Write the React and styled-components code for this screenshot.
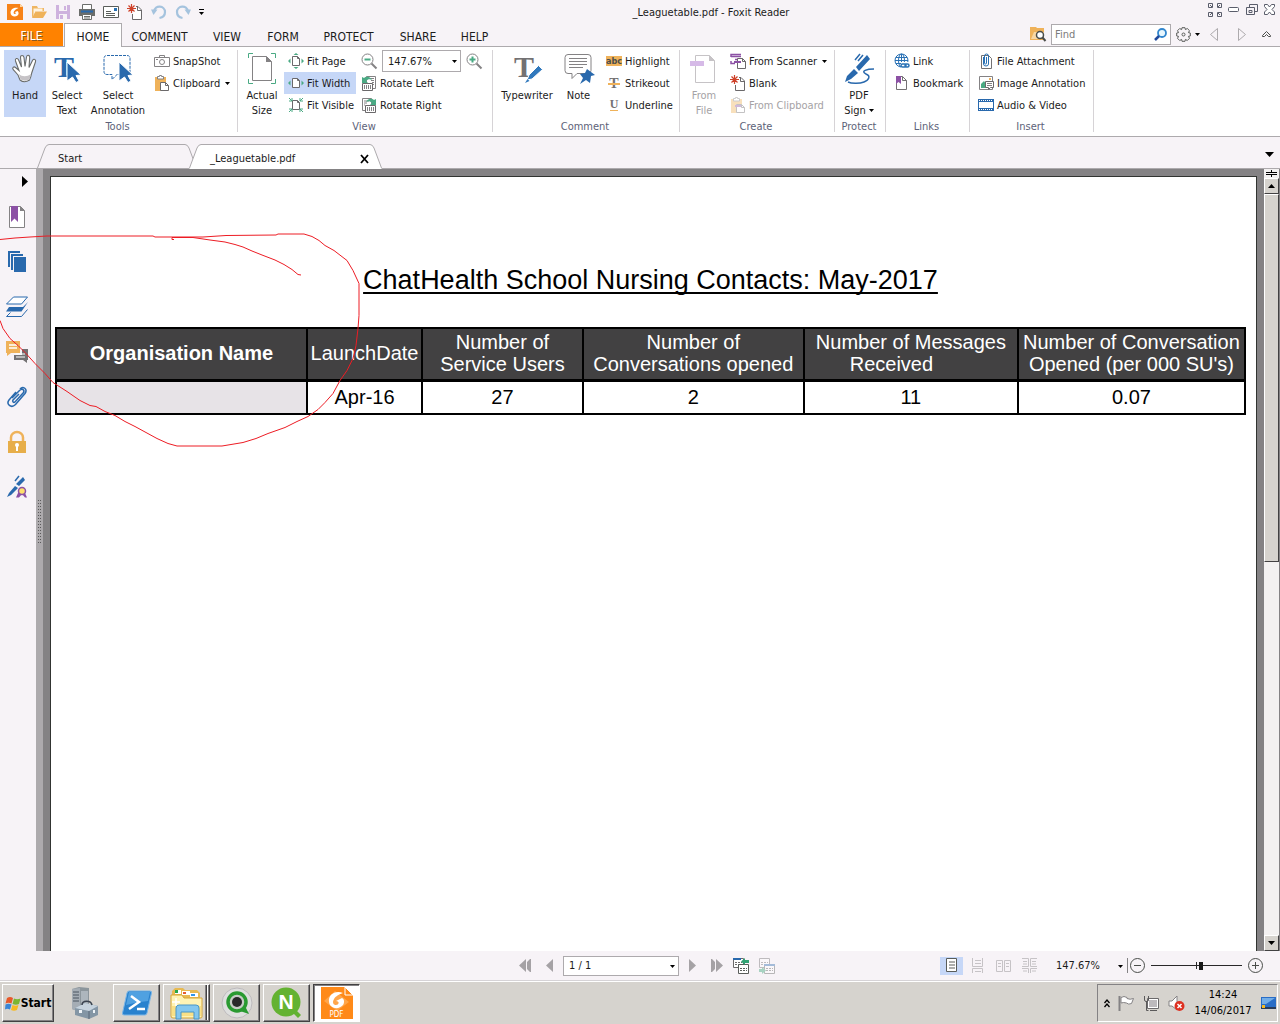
import React from "react";
import styled, { createGlobalStyle } from "styled-components";

const GlobalStyle = createGlobalStyle`
  * {
    box-sizing: border-box;
  }

  body {
    margin: 0;
    font-family: "DejaVu Sans Condensed", "DejaVu Sans", Tahoma, sans-serif;
    font-size: 11px;
    color: #1b1b1b;
  }

  button,
  input,
  select {
    font: inherit;
    color: inherit;
    margin: 0;
  }

  button {
    border: 0;
    padding: 0;
    background: none;
    white-space: nowrap;
  }

  svg {
    display: block;
    flex: none;
    overflow: visible;
  }
`;

const Window = styled.div`
  display: flex;
  flex-direction: column;
  height: 100vh;
  background: #f7f3f7;
  overflow: hidden;
`;

/* ---------- title bar ---------- */

const TitleBar = styled.header`
  display: flex;
  align-items: center;
  height: 23px;
  padding: 0 4px 0 7px;
`;

const QuickAccess = styled.div`
  display: flex;
  align-items: center;
  gap: 8px;
`;

const Title = styled.h1`
  flex: 1;
  margin: 0;
  padding: 2px 0 0 10px;
  font-size: 11px;
  font-weight: 400;
  text-align: center;
`;

const WindowButtons = styled.div`
  display: flex;
  align-items: center;
  gap: 5px;
  padding-bottom: 4px;
`;

/* ---------- menu ---------- */

const MenuBar = styled.nav`
  display: flex;
  height: 24px;
  border-bottom: 1px solid #adaaad;
`;

const FileTab = styled.button`
  width: 63px;
  margin-right: 1px;
  padding-top: 2px;
  background: #ff8200;
  color: #fff;
  font-size: 12px;
  text-shadow: 1px 1px 0 #8a5a20;
`;

const MenuTab = styled.button`
  height: ${(p) => (p.$active ? "24px" : "23px")};
  width: ${(p) => p.$width}px;
  padding-top: 3px;
  font-size: 12px;
  background: ${(p) => (p.$active ? "#fff" : "none")};
  border: 1px solid ${(p) => (p.$active ? "#adaaad" : "transparent")};
  border-bottom: 0;
`;

const MenuTools = styled.div`
  display: flex;
  align-items: center;
  margin-left: auto;
  padding-right: 9px;
  height: 22px;
`;

const FindBox = styled.label`
  display: flex;
  align-items: center;
  width: 120px;
  height: 21px;
  margin: 0 5px;
  padding: 0 3px;
  background: #fff;
  border: 1px solid #adaaad;
`;

const FindInput = styled.input`
  flex: 1;
  min-width: 0;
  border: 0;
  padding: 0;
  outline: 0;
  background: none;

  &::placeholder {
    color: #7b7b7b;
    opacity: 1;
  }
`;

const ToolGap = styled.div`
  display: flex;
  align-items: center;
  gap: ${(p) => p.$gap}px;
`;

/* ---------- ribbon ---------- */

const Ribbon = styled.section`
  display: flex;
  height: 90px;
  padding-top: 3px;
  background: #fff;
  border-bottom: 1px solid #adaaad;
`;

const Group = styled.div`
  display: flex;
  flex-direction: column;
  width: ${(p) => p.$width}px;
  height: 82px;
  border-right: 1px solid #d6d3d6;
`;

const GroupBody = styled.div`
  display: flex;
  height: 67px;
  padding-left: ${(p) => p.$left}px;
`;

const GroupLabel = styled.div`
  height: 15px;
  line-height: 19px;
  padding-right: 2px;
  text-align: center;
  color: #5d6279;
`;

const BigButton = styled.button`
  display: flex;
  flex-direction: column;
  align-items: center;
  width: ${(p) => p.$width}px;
  height: 67px;
  padding-top: 2px;
  line-height: 15px;
  background: ${(p) => (p.$active ? "#c6d7f7" : "none")};
  color: ${(p) => (p.$off ? "#a5a2a5" : "inherit")};

  > svg {
    margin-bottom: 4px;
  }
`;

const Column = styled.div`
  display: flex;
  flex-direction: column;
  width: ${(p) => (p.$width ? `${p.$width}px` : "auto")};
  margin-left: ${(p) => p.$left || 0}px;
`;

const SmallButton = styled.button`
  display: flex;
  align-items: center;
  gap: 3px;
  height: 22px;
  padding: 0 0 0 4px;
  background: ${(p) => (p.$active ? "#c6d7f7" : "none")};
  color: ${(p) => (p.$off ? "#a5a2a5" : "inherit")};

  svg:not(:first-child) {
    margin-left: 2px;
  }
`;

const ZoomRow = styled.div`
  display: flex;
  align-items: center;
  gap: 5px;
  height: 22px;
  padding-left: 4px;
`;

const SelectWrap = styled.div`
  position: relative;
  width: ${(p) => p.$width}px;
  height: ${(p) => p.$height}px;

  svg {
    position: absolute;
    right: 4px;
    top: calc(50% - 1px);
    pointer-events: none;
  }
`;

const Select = styled.select`
  appearance: none;
  width: 100%;
  height: 100%;
  padding: 0 5px;
  background: #fff;
  border: 1px solid #adaaad;
  border-radius: 0;
`;

const PlainSelect = styled(Select)`
  padding-left: 12px;
  background: transparent;
  border-width: 0;
`;

/* ---------- document tabs ---------- */

const TabStrip = styled.div`
  display: flex;
  align-items: flex-end;
  height: 32px;
  padding: 0 6px 0 37px;
  border-bottom: 1px solid #adaaad;
`;

const DocTab = styled.div`
  display: flex;
  height: ${(p) => (p.$active ? "25px" : "24px")};
  margin-bottom: ${(p) => (p.$active ? "-1px" : "0")};
  margin-left: ${(p) => (p.$active ? "-8px" : "0")};
  position: relative;
`;

const DocTabBody = styled.div`
  display: flex;
  align-items: center;
  justify-content: space-between;
  width: ${(p) => p.$width}px;
  padding: 3px 0 0 8px;
  background: ${(p) => (p.$active ? "#fff" : "#f7f3f7")};
  border-top: 1px solid #adaaad;
`;

const TabMenu = styled.button`
  margin: 0 0 11px auto;
`;

/* ---------- workspace ---------- */

const Workspace = styled.main`
  position: relative;
  display: flex;
  flex: 1;
  min-height: 0;
`;

const SideBar = styled.aside`
  display: flex;
  flex-direction: column;
  align-items: center;
  width: 36px;
  padding: 7px 2px 0 0;
`;

const Expand = styled.button`
  align-self: flex-end;
  margin: 0 6px 7px 0;
`;

const SideButton = styled.button`
  display: flex;
  align-items: center;
  justify-content: center;
  height: 45px;
`;

const Splitter = styled.div`
  display: flex;
  align-items: center;
  justify-content: center;
  width: 7px;
  padding-bottom: 76px;
  background: #adaaad;
`;

const Canvas = styled.div`
  flex: 1;
  display: flex;
  padding: 7px 7px 0;
  background: #848284;
`;

const Page = styled.article`
  flex: 1;
  padding: 86px 10px 0 4px;
  background: #fff;
  border: 1px solid #313431;
  border-bottom: 0;
  font-family: "Liberation Sans", Arial, sans-serif;
  color: #000;
`;

const PageTitle = styled.h2`
  margin: 0 0 30px;
  font-size: 27px;
  line-height: 34px;
  font-weight: 400;
  text-align: center;
  text-decoration: underline;
  text-decoration-thickness: 2px;
  text-underline-offset: 3px;
  text-decoration-skip-ink: none;
`;

const Table = styled.table`
  width: 100%;
  table-layout: fixed;
  border-collapse: collapse;
  font-size: 20px;
  line-height: 22px;
  text-align: center;
`;

const Col = styled.col`
  width: ${(p) => p.$width}%;
`;

const Th = styled.th`
  height: 52px;
  padding: 0 0 2px;
  background: #424142;
  color: #fff;
  font-weight: ${(p) => (p.$bold ? 700 : 400)};
  border: 2px solid #000;
  border-bottom-width: 3px;
  white-space: pre;
`;

const Td = styled.td`
  height: 34px;
  padding: 0;
  border: 2px solid #000;
  background: ${(p) => (p.$shaded ? "#e7e3e7" : "#fff")};
`;

const ScrollBar = styled.div`
  display: flex;
  flex-direction: column;
  width: 16px;
  background: #f3f1f1;
  border-right: 1px solid #848284;
`;

const ScrollButton = styled.button`
  display: flex;
  align-items: center;
  justify-content: center;
  height: 16px;
  background: #d6d3ce;
  border: 1px solid;
  border-color: #fff #424142 #424142 #fff;
`;

const ScrollTrack = styled.div`
  flex: 1;
`;

const ScrollThumb = styled.div`
  height: 49.6%;
  background: #d6d3ce;
  border: 1px solid;
  border-color: #fff #424142 #424142 #fff;
`;

const SplitHandle = styled.div`
  display: flex;
  align-items: center;
  justify-content: center;
  height: 9px;
`;

const Annotation = styled.svg`
  position: absolute;
  left: 0;
  top: 0;
  pointer-events: none;
`;

/* ---------- status bar ---------- */

const StatusBar = styled.footer`
  display: grid;
  grid-template-columns: 1fr auto 1fr;
  align-items: center;
  height: 29px;
  padding-left: 14px;
`;

const PageNav = styled.div`
  grid-column: 2;
  display: flex;
  align-items: center;
  gap: 10px;
`;

const ViewControls = styled.div`
  display: flex;
  align-items: center;
  justify-content: flex-end;
  padding-right: 17px;
`;

const ViewButton = styled.button`
  display: flex;
  align-items: center;
  justify-content: center;
  width: 23px;
  height: 18px;
  margin-right: 3px;
  background: ${(p) => (p.$active ? "#c6d7f7" : "none")};
`;

const Divider = styled.span`
  width: 1px;
  height: 15px;
  margin-right: 2px;
  background: #848284;
`;

const Slider = styled.input`
  appearance: none;
  width: 91px;
  height: 16px;
  margin: 0 6px;
  background: linear-gradient(#292829, #292829) center / 100% 1px no-repeat,
    linear-gradient(#292829, #292829) center / 1px 7px no-repeat;

  &::-webkit-slider-thumb {
    appearance: none;
    width: 4px;
    height: 8px;
    background: #181818;
  }
`;

/* ---------- taskbar ---------- */

const TaskBar = styled.footer`
  display: flex;
  align-items: center;
  gap: 3px;
  height: 44px;
  padding: 2px 2px 1px;
  background: #d6d3ce;
  border-top: 1px solid #d6d3d6;
  box-shadow: inset 0 1px 0 #fff;
`;

const TaskButton = styled.button`
  display: flex;
  align-items: center;
  justify-content: center;
  width: ${(p) => p.$width || 47}px;
  height: 38px;
  background: #d6d3ce;
  border: 1px solid;
  border-color: #fff #424142 #424142 #fff;
  box-shadow: inset -1px -1px 0 #848284;
  font-size: 12px;
  font-weight: 700;
  color: #000;
`;

const FlatTaskButton = styled(TaskButton)`
  border-color: transparent;
  box-shadow: none;
`;

const StackedTaskButton = styled(TaskButton)`
  box-shadow: inset -1px -1px 0 #848284, inset -2px 0 0 #fff, inset -3px 0 0 #424142, inset -4px 0 0 #848284;
`;

const PressedTaskButton = styled(TaskButton)`
  background: #fff;
  border-color: #424142 #fff #fff #424142;
  box-shadow: inset 1px 1px 0 #848284;
`;

const Tray = styled.div`
  display: flex;
  align-items: center;
  gap: 8px;
  height: 38px;
  margin-left: auto;
  padding: 0 1px 0 6px;
  border: 1px solid;
  border-color: #848284 #fff #fff #848284;
`;

const Clock = styled.div`
  width: 60px;
  line-height: 16px;
  text-align: center;
  color: #000;
`;

/* ---------- icons ---------- */

const Glyph = styled.text`
  font-family: ${(p) => (p.$serif ? '"Liberation Serif", serif' : '"Liberation Sans", sans-serif')};
  font-size: ${(p) => p.$size}px;
  font-weight: 700;
  text-anchor: middle;
`;

const Icon = ({ w = 16, h = 16, box, children }) => (
  <svg width={w} height={h} viewBox={box || `0 0 ${w} ${h}`} fill="none" aria-hidden="true">
    {children}
  </svg>
);

const Caret = () => (
  <Icon w={5} h={3}>
    <path d="M0 0h5L2.500 3z" fill="#000" />
  </Icon>
);

const FoxitMark = () => (
  <Icon>
    <path d="M0 0h13l3 3v13H0z" fill="#f78218" />
    <path d="M13 0v3h3z" fill="#ffd7a5" />
    <path d="M11.500 4C7.500 2.800 3.500 5 3.500 8.500c0 3.500 4 5 6.700 3.300 1.800-1.300 1.800-3.500.3-4.800L7.500 8.300c2 .2 1.500 2.200 0 1.700C5.500 9 7 5.800 11.500 4z" fill="#fff" />
  </Icon>
);

const FolderIcon = () => (
  <Icon>
    <path d="M1 14V2h5l1 2h6v3H5z" fill="#efb663" />
    <path d="M2.500 12V4.500h9V7H5z" fill="#fff3de" />
    <path d="M4.500 7.500H16L12 14H1z" fill="#efb25a" />
  </Icon>
);

const SaveIcon = () => (
  <Icon>
    <path d="M1 1h14v14H1z" fill="#ceb2de" />
    <path d="M4 1h8v6H4zM4 10h8v5H4z" fill="#f7f3f7" />
    <path d="M9 2h2v4H9zM5 11h3v4H5z" fill="#ceb2de" />
  </Icon>
);

const PrintIcon = () => (
  <Icon>
    <path d="M3.500.5h9v5h-9z" fill="#fff" stroke="#6b6d6b" />
    <path d="M0 5h16v7H0z" fill="#6b6d6b" />
    <path d="M2 6.500h12v2H2z" fill="#2969ad" />
    <path d="M3.500 10.500h9v5h-9z" fill="#fff" stroke="#6b6d6b" />
    <path d="M5 12.500h6M5 14h6" stroke="#6b6d6b" />
  </Icon>
);

const MailIcon = () => (
  <Icon>
    <path d="M.5 2.500h15v11H.5z" fill="#fff" stroke="#5a5d5a" />
    <path d="M11 4h3v3h-3z" fill="#2971b5" />
    <path d="M3 7.500h5M3 9.500h9M3 11.500h9" stroke="#5a5d5a" />
  </Icon>
);

const NewIcon = () => (
  <Icon>
    <path d="M9 2.500h2l3.500 3.500v9.500H5.500V10" fill="#fff" stroke="#6b696b" />
    <path d="M10.500 3v3.500H14" stroke="#6b696b" />
    <path d="M4.500 0v9M0 4.500h9M1.500 1.500l6 6M7.500 1.500l-6 6" stroke="#ce4129" strokeWidth="1.200" />
  </Icon>
);

const UndoIcon = () => (
  <Icon>
    <path d="M3 7.500C4 .5 14 1.500 14 8c0 3.500-2.500 5.500-5.500 6" stroke="#a5c3de" strokeWidth="2.200" />
    <path d="M0 5.500h6.500L2.500 11z" fill="#a5c3de" />
  </Icon>
);

const RedoIcon = () => (
  <Icon>
    <path d="M13 7.500C12 .5 2 1.500 2 8c0 3.500 2.500 5.500 5.500 6" stroke="#a5c3de" strokeWidth="2.200" />
    <path d="M16 5.500H9.500l4 5.500z" fill="#a5c3de" />
  </Icon>
);

const HandIcon = () => (
  <Icon w={28} h={32}>
    <path
      d="M9 28L7 23 2.500 18c-2-2 .3-4 2-2.500l3.500 3L4.500 9c-.8-2.500 2-3.500 3-1.200l3 7.200-1-9.500c0-2.700 3-2.700 3.500 0l1 9 1.500-9.500c.6-2.600 3.400-2 3.200.5L18 15.500l3.500-7c1.300-2.200 3.800-1 3 1.200l-3.700 11c-.6 3-1 5-2.300 7.300-3 2-7 2-9.500 0z"
      fill="#fff"
      stroke="#6b6d6b"
      strokeWidth="1.100"
    />
    <path d="M8 22c3 3 8 3 12 0l-1.500 5.500c-2.500 1.500-6 1.500-9 0z" fill="#c6c3c6" />
  </Icon>
);

const CURSOR = "M0 0l14 13-5 .5 3 5.500-3 1.500L5.500 15 0 19z";

const SelectTextIcon = () => (
  <Icon w={28} h={32}>
    <Glyph $serif $size={30} x="11" y="25" fill="#2969ad">T</Glyph>
    <g transform="translate(14 10)">
      <path d={CURSOR} fill="#2969ad" stroke="#fff" />
    </g>
  </Icon>
);

const SelectAnnotationIcon = () => (
  <Icon w={30} h={32}>
    <path d="M4 3.500h20q3 0 3 3v13q0 3-3 3H14l-5 5v-5H4q-3 0-3-3v-13q0-3 3-3z" stroke="#2969ad" strokeDasharray="3 1" />
    <g transform="translate(16 10)">
      <path d={CURSOR} fill="#2969ad" stroke="#fff" />
    </g>
  </Icon>
);

const CameraIcon = () => (
  <Icon>
    <path d="M.5 4.500h15v9H.5zM5.500 4V2.500h5V4" stroke="#848284" />
    <circle cx="8" cy="9" r="2.500" stroke="#848284" />
    <path d="M2 6h2v1H2z" fill="#848284" />
  </Icon>
);

const ClipboardIcon = ({ off }) => (
  <Icon>
    <g opacity={off ? 0.4 : 1}>
      <path d="M1 2h11v14H1z" fill="#efb25a" />
      <path d="M3.500 4V1.500h2V.5h2v1h2V4z" fill="#fff" stroke="#848284" />
      <path d="M6.500 7.500h5l3 3v5h-8z" fill="#fff" stroke="#6b696b" />
      <path d="M11.500 7.500v3h3" stroke="#6b696b" />
      {off && <path d="M5 8h6v2H5z" fill="#8c51a5" />}
    </g>
  </Icon>
);

const ActualSizeIcon = () => (
  <Icon w={30} h={32}>
    <path d="M1.500 6V1.500H6M24 1.500h4.500V6M1.500 27v4.500H6M24 31.500h4.500V27" stroke="#4aaa84" />
    <path d="M5.500 4.500h14l5 5v19h-19z" stroke="#848284" />
    <path d="M19 4l6 6h-6z" fill="#848284" />
  </Icon>
);

const FitIcon = ({ kind }) => (
  <Icon>
    <path d="M4.500 3.500h5l2 2v7h-7zM9.500 3.500v2h2" fill="#fff" stroke="#6b696b" />
    {kind !== "visible" && <path d="M0 8l2.500-2.500v5zM16 8l-2.500-2.500v5z" fill="#4aaa84" />}
    {kind === "page" && <path d="M8 0L5.500 2h5zM8 16l-2.500-2h5z" fill="#4aaa84" />}
    {kind === "visible" && (
      <path d="M1 1l3 3M1 4h3V1M15 1l-3 3M12 1v3h3M1 15l3-3M1 12h3v3M15 15l-3-3M12 15v-3h3" stroke="#4aaa84" />
    )}
  </Icon>
);

const MagnifierIcon = ({ plus }) => (
  <Icon>
    <circle cx="6.500" cy="6.500" r="5.500" fill="#fff" stroke="#848284" />
    <path d="M10.500 10.500l5 5" stroke="#848284" strokeWidth="2" />
    <path d={plus ? "M3.500 6.500h6M6.500 3.500v6" : "M3.500 6.500h6"} stroke="#4aaa84" strokeWidth="2" />
  </Icon>
);

const RotateIcon = ({ right }) => (
  <Icon>
    <path d="M5.500 1.500h9v12h-9z" fill="#fff" stroke="#848284" transform={right ? "translate(-4 0)" : undefined} />
    <path d={right ? "M3 4h5M3 6h3M3 8h1" : "M9 3.500h4M10 5.500h3M11 7.500h2M12 9.500h1"} stroke="#848284" />
    <path d={right ? "M4.500 8.500h10v7h-10z" : "M1.500 8.500h10v7h-10z"} fill="#fff" stroke="#6b696b" />
    <path d={right ? "M6.500 10v4M8.500 10v4M10.500 10v4M12.500 10v4" : "M3.500 10v4M5.500 10v4M7.500 10v4M9.500 10v4"} stroke="#848284" />
    {right ? (
      <path d="M5 5c2-4 6-4 8-2l2-1v6H9l2-2c-2-2-4-2-6-1z" fill="#4aaa84" />
    ) : (
      <path d="M11 5C9 1 5 1 3 3L1 2v6h6L5 6c2-2 4-2 6-1z" fill="#4aaa84" />
    )}
  </Icon>
);

const TypewriterIcon = () => (
  <Icon w={30} h={32}>
    <Glyph $serif $size={30} x="12" y="25" fill="#737173">T</Glyph>
    <path d="M15 28l2-5 9.500-9.500 4 4L20 27z" fill="#3179bd" stroke="#fff" />
    <path d="M13 31l2.500-4 2 2z" fill="#3179bd" />
  </Icon>
);

const NoteIcon = () => (
  <Icon w={32} h={32}>
    <path d="M5 2.500h20q3 0 3 3v13q0 3-3 3H14l-5 5v-5H5q-3 0-3-3v-13q0-3 3-3z" fill="#fff" stroke="#848284" />
    <path d="M6 6.500h18M6 9.500h18M6 12.500h18M6 15.500h14" stroke="#848284" />
    <path d="M24 17l8 6-4 1-1 7-4-3-6 4 3-6-3-4 5-1z" fill="#2969ad" />
  </Icon>
);

const LetterMark = styled.span`
  width: 16px;
  text-align: center;
  line-height: 10px;
  font-weight: 700;
  font-size: 9px;
  color: #4a4d4a;
  background: #efb25a;
`;

const StrikeIcon = () => (
  <Icon>
    <Glyph $serif $size={14} x="8" y="13" fill="#737173">T</Glyph>
    <path d="M2 8h12v2H2z" fill="#efb25a" />
  </Icon>
);

const UnderlineIcon = () => (
  <Icon>
    <Glyph $serif $size={12} x="8" y="11" fill="#737173">U</Glyph>
    <path d="M4 13h8v1H4z" fill="#efb25a" />
  </Icon>
);

const FromFileIcon = () => (
  <Icon w={28} h={32}>
    <path d="M5.500 3.500h14l5 5v22h-19z" fill="#fff" stroke="#c6c3c6" />
    <path d="M19 3l6 6h-6z" fill="#c6c3c6" />
    <path d="M0 9h14v5H0z" fill="#d6bae7" />
  </Icon>
);

const ScannerIcon = () => (
  <Icon>
    <path d="M1 4V1.500h10M1 3.500h10M5 6.500h3M1 8v2.500h4" stroke="#8c51a5" strokeWidth="1.500" />
    <path d="M7.500 5.500h5l3 3v7h-8z" fill="#fff" stroke="#6b696b" />
    <path d="M12.500 5.500v3h3" stroke="#6b696b" />
    <path d="M4 8h7v2H4z" fill="#8c51a5" />
  </Icon>
);

const SignIcon = () => (
  <Icon w={30} h={32}>
    <path d="M12 15L23 3l3 4-11 12zM10 17l4 4-7 6-6 3 2-6z" fill="#2969ad" />
    <path d="M11 8l5-6M14 9l5-6" stroke="#2969ad" strokeWidth="1.500" />
    <path d="M30 17c-7 0-14 2-8 5 5 2 3 6-2 8-4 1.500-12 2-16 0" stroke="#2969ad" strokeWidth="1.500" />
  </Icon>
);

const GlobeIcon = () => (
  <Icon>
    <circle cx="7.500" cy="7.500" r="6.500" stroke="#2971b5" />
    <path d="M1 7.500h13M2 4.500h11M2 10.500h8M7.500 1v13" stroke="#2971b5" />
    <ellipse cx="7.500" cy="7.500" rx="3" ry="6.500" stroke="#2971b5" />
    <path d="M7 9h9v7H7z" fill="#fff" />
    <rect x="7" y="11" width="5" height="3" rx="1.500" stroke="#2971b5" strokeWidth="1.500" />
    <rect x="11" y="11" width="4" height="3" rx="1.500" stroke="#2971b5" strokeWidth="1.500" />
  </Icon>
);

const BookmarkIcon = () => (
  <Icon>
    <path d="M2.500 1.500h6l4 4v9h-10z" fill="#fff" stroke="#737173" />
    <path d="M8.500 1.500v4h4" stroke="#737173" />
    <path d="M2 1h5v8L4.500 7 2 9z" fill="#8c51a5" />
  </Icon>
);

const AttachIcon = () => (
  <Icon>
    <path d="M3.500 2.500h7l3 3v10h-10z" fill="#fff" stroke="#737173" />
    <path d="M5.500 4v7a2.500 2 0 0 0 5 0V3a2 2 0 0 0-4 0v7a1 1 0 0 0 2 0V4" stroke="#2971b5" />
  </Icon>
);

const ImageIcon = () => (
  <Icon>
    <path d="M1.500 1.500h13v13h-13z" fill="#fff" stroke="#848284" />
    <path d="M3 13V9l3-3 2 3v4z" fill="#4aaa84" />
    <path d="M11 3h2v2h-2z" fill="#efb25a" />
    <path d="M7.500 6.500h8v6h-3l-2 2v-2h-3z" fill="#fff" stroke="#6b696b" />
    <path d="M9 8.500h5M9 10.500h5" stroke="#848284" />
  </Icon>
);

const VideoIcon = () => (
  <Icon>
    <path d="M0 2h16v12H0z" fill="#2969ad" />
    <path d="M1 5h14v6H1z" fill="#fff" />
    <path d="M1 3.500h14M1 12.500h14" stroke="#fff" strokeDasharray="1 1" />
  </Icon>
);

const FindFolderIcon = () => (
  <Icon>
    <path d="M0 1h6l1 1h7v12H0z" fill="#efb25a" />
    <path d="M1 13l3-7h10v7z" fill="#f7d7a5" />
    <circle cx="10" cy="9" r="3.500" fill="#fff" stroke="#4a4d4a" strokeWidth="1.500" />
    <path d="M12.500 11.500l3 3.500" stroke="#4a4d4a" strokeWidth="2" />
  </Icon>
);

const SearchIcon = () => (
  <Icon w={13} h={13}>
    <circle cx="8" cy="5" r="4" fill="#e7f7ff" stroke="#3186ce" strokeWidth="1.800" />
    <path d="M5 8l-4 4" stroke="#214a9c" strokeWidth="2.500" />
  </Icon>
);

const GearIcon = () => (
  <Icon w={15} h={15}>
    <path
      d="M6 .7h3l.4 1.900 1.900-1.100 2.200 2.200-1.100 1.900 1.900.4v3l-1.900.4 1.100 1.900-2.200 2.200-1.900-1.100-.4 1.900H6l-.4-1.900-1.900 1.100-2.200-2.200 1.100-1.900L.7 9V6l1.900-.4-1.100-1.900 2.200-2.200 1.900 1.100z"
      stroke="#5a5d5a"
      strokeLinejoin="round"
    />
    <circle cx="7.500" cy="7.500" r="1.500" stroke="#5a5d5a" />
  </Icon>
);

const HollowArrow = ({ right }) => (
  <Icon w={8} h={13}>
    <path d={right ? "M.5.5v12l7-6z" : "M7.500.5v12l-7-6z"} stroke="#adaaad" />
  </Icon>
);

const SolidArrow = ({ right, bar }) => (
  <Icon w={bar ? 12 : 7} h={13}>
    {bar ? (
      <path d={right ? "M5 0v13l7-6.500zM0 0h1l3 3v7l-3 3H0z" : "M7 0v13L0 6.500zM12 0h-1L8 3v7l3 3h1z"} fill="#a5a2a5" />
    ) : (
      <path d={right ? "M0 0v13l7-6.500z" : "M7 0v13L0 6.500z"} fill="#a5a2a5" />
    )}
  </Icon>
);

const NextViewIcon = ({ off }) => (
  <Icon>
    <g opacity={off ? 0.4 : 1}>
      <path d="M.5.5h10v9H.5z" fill="#fff" stroke="#6b696b" />
      <path d="M2 4.500h7M2 6.500h7" stroke="#6b696b" strokeDasharray="2 1" />
      <path d="M5.500 6.500h10v9h-10z" fill="#fff" stroke="#5a5d5a" />
      <path d="M7 10.500h7M7 12.500h7" stroke="#5a5d5a" strokeDasharray="2 1" />
      <path d={off ? "M5 6h11v2H5z" : "M0 0h8v2H0z"} fill="#2969ad" />
      <path d={off ? "M0 11h3V9l4 3.500L3 16v-2H0z" : "M8 3.500L12 0v2h4v3h-4v2z"} fill="#31a273" />
    </g>
  </Icon>
);

const LayoutIcon = ({ kind }) => {
  const paths = {
    single: "M2.500.5h10v13h-10zM5 4h6M5 7h6M5 10h6",
    scroll: "M2.500 0v8.500h10V0M5 2.500h6M5 5.500h6M2.500 15v-4.500h10V15M5 13.500h6",
    facing: "M.5 2.500h6v11h-6zM8.500 2.500h6v11h-6zM2 5.500h3M2 8.500h3M10 5.500h3M10 8.500h3",
    both: "M0 .5h6.500v8H0M15 .5H8.500v8H15M1 3.500h4M1 6h4M10 3.500h4M10 6h4M0 10.500h6.500V15M15 10.500H8.500V15M1 13h4M10 13h4",
  };
  return (
    <Icon w={15} h={15}>
      <path d={paths[kind]} stroke={kind === "single" ? "#5a5d5a" : "#c6c3c6"} fill={kind === "single" ? "#fff" : "none"} />
    </Icon>
  );
};

const RoundIcon = ({ plus }) => (
  <Icon w={15} h={15}>
    <circle cx="7.500" cy="7.500" r="7" stroke="#4a4d4a" />
    <path d={plus ? "M4 7.500h7M7.500 4v7" : "M4 7.500h7"} stroke="#4a4d4a" />
  </Icon>
);

const TabEdge = ({ right, active }) => (
  <Icon w={13} h={active ? 25 : 24}>
    <path
      d={right ? "M0 .5h1Q3.500.5 5 4l7.500 19.500V25H0z" : "M13 .5h-1Q9.500.5 8 4L.5 23.500V25H13z"}
      fill={active ? "#fff" : "none"}
    />
    <path d={right ? "M0 .5h1Q3.500.5 5 4l7.500 20" : "M13 .5h-1Q9.500.5 8 4L.5 24"} stroke="#adaaad" />
  </Icon>
);

const SideIcons = {
  Bookmarks: (
    <Icon w={18} h={23}>
      <path d="M1.500 1.500h11l4 4v17h-15z" fill="#fff" stroke="#848284" />
      <path d="M12 1l5 5h-5z" fill="#848284" />
      <path d="M3 1h7v16l-3.500-3.500L3 17z" fill="#8c51a5" />
    </Icon>
  ),
  Pages: (
    <Icon w={18} h={21}>
      <path d="M0 0h12v2H2v14H0zM3 3h12v2H5v14H3z" fill="#2969ad" />
      <path d="M6 6h12v15H6z" fill="#2969ad" />
    </Icon>
  ),
  Layers: (
    <Icon w={24} h={22}>
      <path d="M8.500 1h14l-6 7h-15z" fill="#fff" stroke="#2969ad" />
      <path d="M4 11h14l5-5-6.500 9.500H1z" fill="#2969ad" />
      <path d="M5.500 16.500l-4 4h15l6-7" stroke="#2969ad" />
    </Icon>
  ),
  Comments: (
    <Icon w={22} h={22}>
      <path d="M0 0h14v12H5l-4 3v-3H0z" fill="#efb25a" />
      <path d="M3 4h8M3 7h8" stroke="#fff" strokeWidth="1.300" />
      <path d="M16 8h6v11h-1v3l-4-3H8v-5h8z" fill="#737173" />
      <path d="M10 13h9M10 16h9" stroke="#fff" />
    </Icon>
  ),
  Attachments: (
    <Icon w={20} h={22}>
      <path
        d="M5 12l8-8c2-2 5 0 3.500 2.500L8 16c-1.500 1-3-.5-2-2l6-6M13 3c3-3.500 8 0 5 4.500L8.500 18.500C4 23-1 18 2 14L9 6"
        stroke="#2969ad"
        strokeWidth="1.500"
      />
    </Icon>
  ),
  Security: (
    <Icon w={18} h={22}>
      <path d="M3 10V6.500a6 5.500 0 0 1 12 0V10" stroke="#efb25a" strokeWidth="2.500" />
      <path d="M0 10h18v12H0z" fill="#e7ae4a" />
      <circle cx="9" cy="14" r="2" fill="#fff" />
      <path d="M8 15h2v5H8z" fill="#fff" />
    </Icon>
  ),
  Signatures: (
    <Icon w={20} h={22}>
      <path d="M9 8l7-7 2 3-6 6zM8 10l3 2-7 7-4 2 2-4z" fill="#2969ad" />
      <path d="M8 5l4-5" stroke="#2969ad" strokeWidth="1.500" />
      <path d="M11 17l-2 4.500h3L15 18l3 3.500h2L18 17z" fill="#8c51a5" />
      <circle cx="15" cy="15" r="3.500" fill="#ffdf6b" stroke="#8c51a5" strokeWidth="1.500" />
    </Icon>
  ),
};

const GripDots = () => (
  <Icon w={3} h={44}>
    <path d="M.5 0v44M2.500 0v44" stroke="#5a595a" strokeDasharray="1 2" />
  </Icon>
);

const WindowsFlag = () => (
  <Icon w={16} h={15}>
    <path d="M2 2q3-2 6 0L6.500 7.500q-3-1.500-6 0z" fill="#e7592a" />
    <path d="M9 2.500q3 1.500 6.500 0L14 8q-3 1.500-6.500 0z" fill="#7bb631" />
    <path d="M.5 8.500q3-1.500 6 0L5 13.500q-3-1.500-5 0z" fill="#3a86d6" />
    <path d="M7.500 9q3 1.500 6 0l-1.500 5q-3 1.500-6 0z" fill="#f7ba21" />
  </Icon>
);

const ServerIcon = () => (
  <Icon w={30} h={34}>
    <path d="M3 3l7-2 10 1v22l-9 2-8-3z" fill="#8c969c" />
    <path d="M11 2v24l-8-3V3z" fill="#a5adb5" />
    <path d="M4 6h6M4 9h6M4 12h6M4 15h6" stroke="#4a5560" />
    <path d="M12 5h7v18h-7z" fill="#adb6bd" />
    <path d="M6 22l10-5 13 3v9l-9 4-14-4z" fill="#8496a5" />
    <path d="M6 22l10-5 13 3-9 5z" fill="#c6d3de" />
    <path d="M20 25v8" stroke="#5a6979" />
    <path d="M13 19c0-5 9-5 10 0" stroke="#3a4350" strokeWidth="1.500" />
    <path d="M10 24h3v3h-3zM24 24h2v3h-2z" fill="#eef3f7" />
  </Icon>
);

const ShellIcon = () => (
  <Icon w={30} h={26}>
    <path d="M7 1h21q2 0 1.500 2L25 23q-.5 2-2 2H2q-2 0-1.500-2L5 3q.5-2 2-2z" fill="#2982ce" stroke="#7bb6e7" />
    <path d="M7 2h21l-2 9Q14 12 4 15z" fill="#6bb6ef" opacity=".6" />
    <path d="M9 6l8 6-10 7M15 19h8" stroke="#fff" strokeWidth="2.500" />
  </Icon>
);

const ExplorerIcon = () => (
  <Icon w={34} h={34}>
    <path d="M2 5l3-3h8l2 2h12l3 3v22H2z" fill="#e7ba52" />
    <path d="M5 4h6v4H5z" fill="#fff" />
    <path d="M5 4h3v3H5z" fill="#29a64a" />
    <path d="M12 5h8v4h-8z" fill="#fff" />
    <path d="M13 6h3v2h-3z" fill="#e75d31" />
    <path d="M20 7h8v4h-8z" fill="#fff" />
    <path d="M21 8h4v2h-4z" fill="#3196e7" />
    <path d="M1 9h11l2 3h18v19q0 1-2 1H3q-2 0-2-2z" fill="#fff3b5" stroke="#d6a639" />
    <path d="M2 20h29v10H2z" fill="#f7d773" opacity=".7" />
    <path d="M6 33V22q0-3 3-3h17q3 0 3 3v11h-5v-7H11v7z" fill="#84c7ef" stroke="#4a96c6" />
    <path d="M6 12v8M2 16h8" stroke="#fff" strokeWidth="1.500" />
  </Icon>
);

const QlikIcon = () => (
  <Icon w={32} h={32}>
    <circle cx="16" cy="16" r="15" fill="#dedfde" stroke="#bdbabd" />
    <path d="M24 19l4 8-9-3z" fill="#299a31" />
    <circle cx="16" cy="15" r="9" fill="#c6cbc6" stroke="#299a31" strokeWidth="3.500" />
    <circle cx="16" cy="15" r="5" fill="#29282b" />
  </Icon>
);

const NPrintingIcon = () => (
  <Icon w={32} h={32}>
    <circle cx="15" cy="15" r="14.500" fill="#63b231" />
    <path d="M25 23l5 5-3 3-5-5z" fill="#63b231" />
    <Glyph $size={21} x="15" y="22" fill="#fff">N</Glyph>
  </Icon>
);

const FoxitTile = styled.span`
  display: flex;
  align-items: flex-end;
  justify-content: center;
  position: relative;
  width: 32px;
  height: 32px;
  color: #fff;
  font-size: 8px;
  font-weight: 400;
  line-height: 9px;

  svg {
    position: absolute;
    inset: 0;
  }

  span {
    position: relative;
  }
`;

const FoxitTaskIcon = () => (
  <FoxitTile>
    <Icon w={32} h={32}>
      <path d="M0 0h24l8 8v24H0z" fill="#ff8a18" />
      <path d="M24 0v8h8z" fill="#ff8a18" stroke="#fff" />
      <path d="M3 14L14 4l14 11-12 9z" fill="#ffa64a" />
      <path d="M22 6C14 3 7 8 8 15c1 7 10 8 14 3 2-3 1-6-1-7l-6 3c4 0 3 4 0 4-5 0-4-9 7-12z" fill="#fff" />
    </Icon>
    <span>PDF</span>
  </FoxitTile>
);

const FlagIcon = () => (
  <Icon w={17} h={17}>
    <path d="M1.500 1v15" stroke="#848284" strokeWidth="2" />
    <path d="M3 2.500q3-2 6 0v1q3 1.500 6.500 0l-2 5q-3 1.500-5-.5-3-1-5.500 0z" fill="#fff" stroke="#848284" />
  </Icon>
);

const NetworkIcon = () => (
  <Icon w={17} h={17}>
    <path d="M4.500 3.500h11v10h-11z" fill="#fff" stroke="#6b696b" />
    <path d="M6 5h8v7H6z" fill="#bdbabd" />
    <path d="M7 15.500h7M1.500 1v4q0 1.500 2 1.500t2-1.500V1M3.500 6v9.500h2" stroke="#5a595a" />
  </Icon>
);

const VolumeIcon = () => (
  <Icon w={17} h={17}>
    <path d="M1 6h3l5-5v14l-5-4H1z" fill="#fff" stroke="#848284" />
    <circle cx="11.500" cy="11" r="5" fill="#de3021" />
    <path d="M9.500 9l4 4M13.500 9l-4 4" stroke="#fff" strokeWidth="1.500" />
  </Icon>
);

const DesktopIcon = () => (
  <Icon w={15} h={14}>
    <path d="M0 1h15v10H0z" fill="#296dc6" />
    <path d="M1 2h13L5 8H1z" fill="#73aee7" />
    <path d="M0 11h15v2H0z" fill="#293c5a" />
    <path d="M1 9h3v3H1z" fill="#f7ba21" />
  </Icon>
);

/* ---------- data ---------- */

const menuTabs = [
  { label: "HOME", width: 58, active: true },
  { label: "COMMENT", width: 75 },
  { label: "VIEW", width: 60 },
  { label: "FORM", width: 52 },
  { label: "PROTECT", width: 79 },
  { label: "SHARE", width: 60 },
  { label: "HELP", width: 53 },
];

const columns = [
  { label: "Organisation Name", width: 21.1, bold: true },
  { label: "LaunchDate", width: 9.7 },
  { label: "Number of\nService Users", width: 13.5 },
  { label: "Number of\nConversations opened", width: 18.6 },
  { label: "Number of Messages\nReceived\u00a0\u00a0\u00a0\u00a0\u00a0\u00a0\u00a0", width: 18 },
  { label: "Number of Conversation\nOpened (per 000 SU's)", width: 19.1 },
];

const row = ["", "Apr-16", "27", "2", "11", "0.07"];

const loop =
  "M301 275l-3-.5-6-5-8-5-9-4.500-13-5-10-4-9-4-8-2.500-10-2.500-15-2-17-2.500h-21v2h2M0 239.500l15-1.500 15-1 17-1h106l2 1h48l23-1.500 50-.5 2-1h26l8 2.500 7 4 6 5 9 5 13 10 6 10 6 13v32l-1 13-2 17-3 13-6 12-7 10-7 13-8 9-7 7-10 7-11 5-12 6-17 6-12 5-13 4-21 3.500h-45l-9-2.500-11-5-11-6-11-6-10-5-10-6-10-4-9-5-6-1-10-5-13-9-14-9-8-9-10-10-9-10-8-8-8-7-7-10-3-8";

/* ---------- app ---------- */

const App = () => (
  <Window>
    <GlobalStyle />
    <TitleBar>
      <QuickAccess>
        <FoxitMark />
        <button aria-label="Open"><FolderIcon /></button>
        <button aria-label="Save"><SaveIcon /></button>
        <button aria-label="Print"><PrintIcon /></button>
        <button aria-label="Email"><MailIcon /></button>
        <button aria-label="New"><NewIcon /></button>
        <button aria-label="Undo"><UndoIcon /></button>
        <button aria-label="Redo"><RedoIcon /></button>
        <button aria-label="Customize">
          <Icon w={5} h={6}>
            <path d="M0 .5h5" stroke="#000" />
            <path d="M0 3h5L2.500 6z" fill="#000" />
          </Icon>
        </button>
      </QuickAccess>
      <Title>_Leaguetable.pdf - Foxit Reader</Title>
      <WindowButtons>
        <button aria-label="Full screen">
          <Icon w={14} h={14}>
            <path d="M.5.5h4v4h-4zM9.500.5h4v4h-4zM.5 9.500h4v4h-4zM9.500 9.500h4v4h-4zM2 2l2 2M12 2l-2 2M2 12l2-2M12 12l-2-2" stroke="#5a5d6b" />
          </Icon>
        </button>
        <button aria-label="Minimize">
          <Icon w={13} h={13}>
            <rect x="1.500" y="4.500" width="10" height="4" rx="1" fill="#fff" stroke="#5a5d6b" />
          </Icon>
        </button>
        <button aria-label="Restore">
          <Icon w={13} h={13}>
            <path d="M4.500 4V1.500h8v7H10M1.500 4.500h8v7h-8zM4 7.500h3v2H4z" stroke="#5a5d6b" />
          </Icon>
        </button>
        <button aria-label="Close">
          <Icon w={13} h={13}>
            <path d="M1.500 1.500h3l2 2.500 2-2.500h3v2L9 6.500 11.500 9v2.500h-3l-2-2.500-2 2.500h-3V9L4 6.500 1.500 3.500z" fill="#fff" stroke="#5a5d6b" />
          </Icon>
        </button>
      </WindowButtons>
    </TitleBar>

    <MenuBar>
      <FileTab>FILE</FileTab>
      {menuTabs.map((tab) => (
        <MenuTab key={tab.label} $width={tab.width} $active={tab.active}>
          {tab.label}
        </MenuTab>
      ))}
      <MenuTools>
        <button aria-label="Search folder"><FindFolderIcon /></button>
        <FindBox>
          <FindInput type="text" placeholder="Find" aria-label="Find" />
          <SearchIcon />
        </FindBox>
        <ToolGap $gap={10}>
          <ToolGap $gap={4}>
            <button aria-label="Settings"><GearIcon /></button>
            <Caret />
          </ToolGap>
          <ToolGap $gap={16}>
            <ToolGap $gap={20}>
              <button aria-label="Previous result"><HollowArrow /></button>
              <button aria-label="Next result"><HollowArrow right /></button>
            </ToolGap>
            <button aria-label="Collapse ribbon">
              <Icon w={9} h={8}>
                <path d="M.5 5.500l4-4 4 4v1h-2l-2-2-2 2h-2z" stroke="#4a4d4a" />
              </Icon>
            </button>
          </ToolGap>
        </ToolGap>
      </MenuTools>
    </MenuBar>

    <Ribbon>
      <Group $width={238}>
        <GroupBody $left={4}>
          <BigButton $width={42} $active><HandIcon />Hand</BigButton>
          <BigButton $width={42}><SelectTextIcon />Select<br />Text</BigButton>
          <BigButton $width={60}><SelectAnnotationIcon />Select<br />Annotation</BigButton>
          <Column $left={2}>
            <SmallButton><CameraIcon />SnapShot</SmallButton>
            <SmallButton><ClipboardIcon />Clipboard <Caret /></SmallButton>
          </Column>
        </GroupBody>
        <GroupLabel>Tools</GroupLabel>
      </Group>

      <Group $width={255}>
        <GroupBody $left={2}>
          <BigButton $width={44}><ActualSizeIcon />Actual<br />Size</BigButton>
          <Column $width={72}>
            <SmallButton><FitIcon kind="page" />Fit Page</SmallButton>
            <SmallButton $active><FitIcon kind="width" />Fit Width</SmallButton>
            <SmallButton><FitIcon kind="visible" />Fit Visible</SmallButton>
          </Column>
          <Column $left={1}>
            <ZoomRow>
              <button aria-label="Zoom out"><MagnifierIcon /></button>
              <SelectWrap $width={79} $height={22}>
                <Select aria-label="Zoom level" defaultValue="147.67%">
                  <option>147.67%</option>
                </Select>
                <Caret />
              </SelectWrap>
              <button aria-label="Zoom in"><MagnifierIcon plus /></button>
            </ZoomRow>
            <SmallButton><RotateIcon />Rotate Left</SmallButton>
            <SmallButton><RotateIcon right />Rotate Right</SmallButton>
          </Column>
        </GroupBody>
        <GroupLabel>View</GroupLabel>
      </Group>

      <Group $width={187}>
        <GroupBody $left={6}>
          <BigButton $width={56}><TypewriterIcon />Typewriter</BigButton>
          <BigButton $width={47}><NoteIcon />Note</BigButton>
          <Column>
            <SmallButton><LetterMark>abc</LetterMark>Highlight</SmallButton>
            <SmallButton><StrikeIcon />Strikeout</SmallButton>
            <SmallButton><UnderlineIcon />Underline</SmallButton>
          </Column>
        </GroupBody>
        <GroupLabel>Comment</GroupLabel>
      </Group>

      <Group $width={155}>
        <GroupBody $left={2}>
          <BigButton $width={44} $off><FromFileIcon />From<br />File</BigButton>
          <Column>
            <SmallButton><ScannerIcon />From Scanner <Caret /></SmallButton>
            <SmallButton><NewIcon />Blank</SmallButton>
            <SmallButton $off><ClipboardIcon off />From Clipboard</SmallButton>
          </Column>
        </GroupBody>
        <GroupLabel>Create</GroupLabel>
      </Group>

      <Group $width={51}>
        <GroupBody $left={2}>
          <BigButton $width={44}>
            <SignIcon />
            PDF
            <ToolGap $gap={3}>Sign <Caret /></ToolGap>
          </BigButton>
        </GroupBody>
        <GroupLabel>Protect</GroupLabel>
      </Group>

      <Group $width={84}>
        <GroupBody $left={4}>
          <Column>
            <SmallButton><GlobeIcon />Link</SmallButton>
            <SmallButton><BookmarkIcon />Bookmark</SmallButton>
          </Column>
        </GroupBody>
        <GroupLabel>Links</GroupLabel>
      </Group>

      <Group $width={124}>
        <GroupBody $left={4}>
          <Column>
            <SmallButton><AttachIcon />File Attachment</SmallButton>
            <SmallButton><ImageIcon />Image Annotation</SmallButton>
            <SmallButton><VideoIcon />Audio &amp; Video</SmallButton>
          </Column>
        </GroupBody>
        <GroupLabel>Insert</GroupLabel>
      </Group>
    </Ribbon>

    <TabStrip>
      <DocTab>
        <TabEdge />
        <DocTabBody $width={134}>Start</DocTabBody>
        <TabEdge right />
      </DocTab>
      <DocTab $active>
        <TabEdge active />
        <DocTabBody $width={167} $active>
          _Leaguetable.pdf
          <button aria-label="Close tab">
            <Icon w={9} h={8}>
              <path d="M1 0l7 8M8 0L1 8" stroke="#000" strokeWidth="1.800" />
            </Icon>
          </button>
        </DocTabBody>
        <TabEdge right active />
      </DocTab>
      <TabMenu aria-label="Tab list">
        <Icon w={9} h={5}>
          <path d="M0 0h9L4.500 5z" fill="#000" />
        </Icon>
      </TabMenu>
    </TabStrip>

    <Workspace>
      <SideBar>
        <Expand aria-label="Expand panel">
          <Icon w={6} h={11}>
            <path d="M0 0v11l6-5.500z" fill="#000" />
          </Icon>
        </Expand>
        {Object.keys(SideIcons).map((name) => (
          <SideButton key={name} aria-label={name}>
            {SideIcons[name]}
          </SideButton>
        ))}
      </SideBar>
      <Splitter><GripDots /></Splitter>
      <Canvas>
        <Page>
          <PageTitle>ChatHealth School Nursing Contacts: May-2017</PageTitle>
          <Table>
            <colgroup>
              {columns.map((c) => (
                <Col key={c.label} $width={c.width} />
              ))}
            </colgroup>
            <thead>
              <tr>
                {columns.map((c) => (
                  <Th key={c.label} $bold={c.bold}>{c.label}</Th>
                ))}
              </tr>
            </thead>
            <tbody>
              <tr>
                {row.map((value, i) => (
                  <Td key={columns[i].label} $shaded={i === 0}>{value}</Td>
                ))}
              </tr>
            </tbody>
          </Table>
        </Page>
      </Canvas>
      <ScrollBar>
        <SplitHandle>
          <Icon w={11} h={7}>
            <path d="M0 2.500h11M0 4.500h11M5.500 0v2M5.500 5v2" stroke="#000" />
          </Icon>
        </SplitHandle>
        <ScrollButton aria-label="Scroll up">
          <Icon w={7} h={4}>
            <path d="M3.500 0L7 4H0z" fill="#000" />
          </Icon>
        </ScrollButton>
        <ScrollTrack>
          <ScrollThumb />
        </ScrollTrack>
        <ScrollButton aria-label="Scroll down">
          <Icon w={7} h={4}>
            <path d="M0 0h7L3.500 4z" fill="#000" />
          </Icon>
        </ScrollButton>
      </ScrollBar>
      <Annotation width="361" height="278" viewBox="0 169 361 278" fill="none" aria-hidden="true">
        <path d={loop} stroke="#ed1c24" />
      </Annotation>
    </Workspace>

    <StatusBar>
      <PageNav>
        <ToolGap $gap={15}>
          <button aria-label="First page"><SolidArrow bar /></button>
          <button aria-label="Previous page"><SolidArrow /></button>
        </ToolGap>
        <SelectWrap $width={116} $height={20}>
          <Select aria-label="Page" defaultValue="1 / 1">
            <option>1 / 1</option>
          </Select>
          <Caret />
        </SelectWrap>
        <ToolGap $gap={15}>
          <button aria-label="Next page"><SolidArrow right /></button>
          <button aria-label="Last page"><SolidArrow right bar /></button>
        </ToolGap>
        <button aria-label="Previous view"><NextViewIcon /></button>
        <button aria-label="Next view"><NextViewIcon off /></button>
      </PageNav>
      <ViewControls>
        <ViewButton $active aria-label="Single page"><LayoutIcon kind="single" /></ViewButton>
        <ViewButton aria-label="Continuous"><LayoutIcon kind="scroll" /></ViewButton>
        <ViewButton aria-label="Facing"><LayoutIcon kind="facing" /></ViewButton>
        <ViewButton aria-label="Continuous facing"><LayoutIcon kind="both" /></ViewButton>
        <SelectWrap $width={83} $height={20}>
          <PlainSelect aria-label="Page zoom" defaultValue="147.67%">
            <option>147.67%</option>
          </PlainSelect>
          <Caret />
        </SelectWrap>
        <Divider />
        <button aria-label="Zoom out"><RoundIcon /></button>
        <Slider type="range" min="0" max="100" defaultValue="55" aria-label="Zoom" />
        <button aria-label="Zoom in"><RoundIcon plus /></button>
      </ViewControls>
    </StatusBar>

    <TaskBar>
      <TaskButton $width={52}><WindowsFlag />Start</TaskButton>
      <FlatTaskButton $width={53} aria-label="Server Manager"><ServerIcon /></FlatTaskButton>
      <TaskButton aria-label="PowerShell"><ShellIcon /></TaskButton>
      <StackedTaskButton aria-label="Explorer"><ExplorerIcon /></StackedTaskButton>
      <TaskButton aria-label="Qlik"><QlikIcon /></TaskButton>
      <TaskButton aria-label="NPrinting"><NPrintingIcon /></TaskButton>
      <PressedTaskButton aria-label="Foxit Reader"><FoxitTaskIcon /></PressedTaskButton>
      <Tray>
        <Icon w={6} h={9}>
          <path d="M.5 4L3 1l2.500 3M.5 8L3 5l2.500 3" stroke="#000" strokeWidth="1.300" />
        </Icon>
        <FlagIcon />
        <NetworkIcon />
        <VolumeIcon />
        <Clock>
          14:24
          <br />
          14/06/2017
        </Clock>
        <DesktopIcon />
      </Tray>
    </TaskBar>
  </Window>
);

export default App;
